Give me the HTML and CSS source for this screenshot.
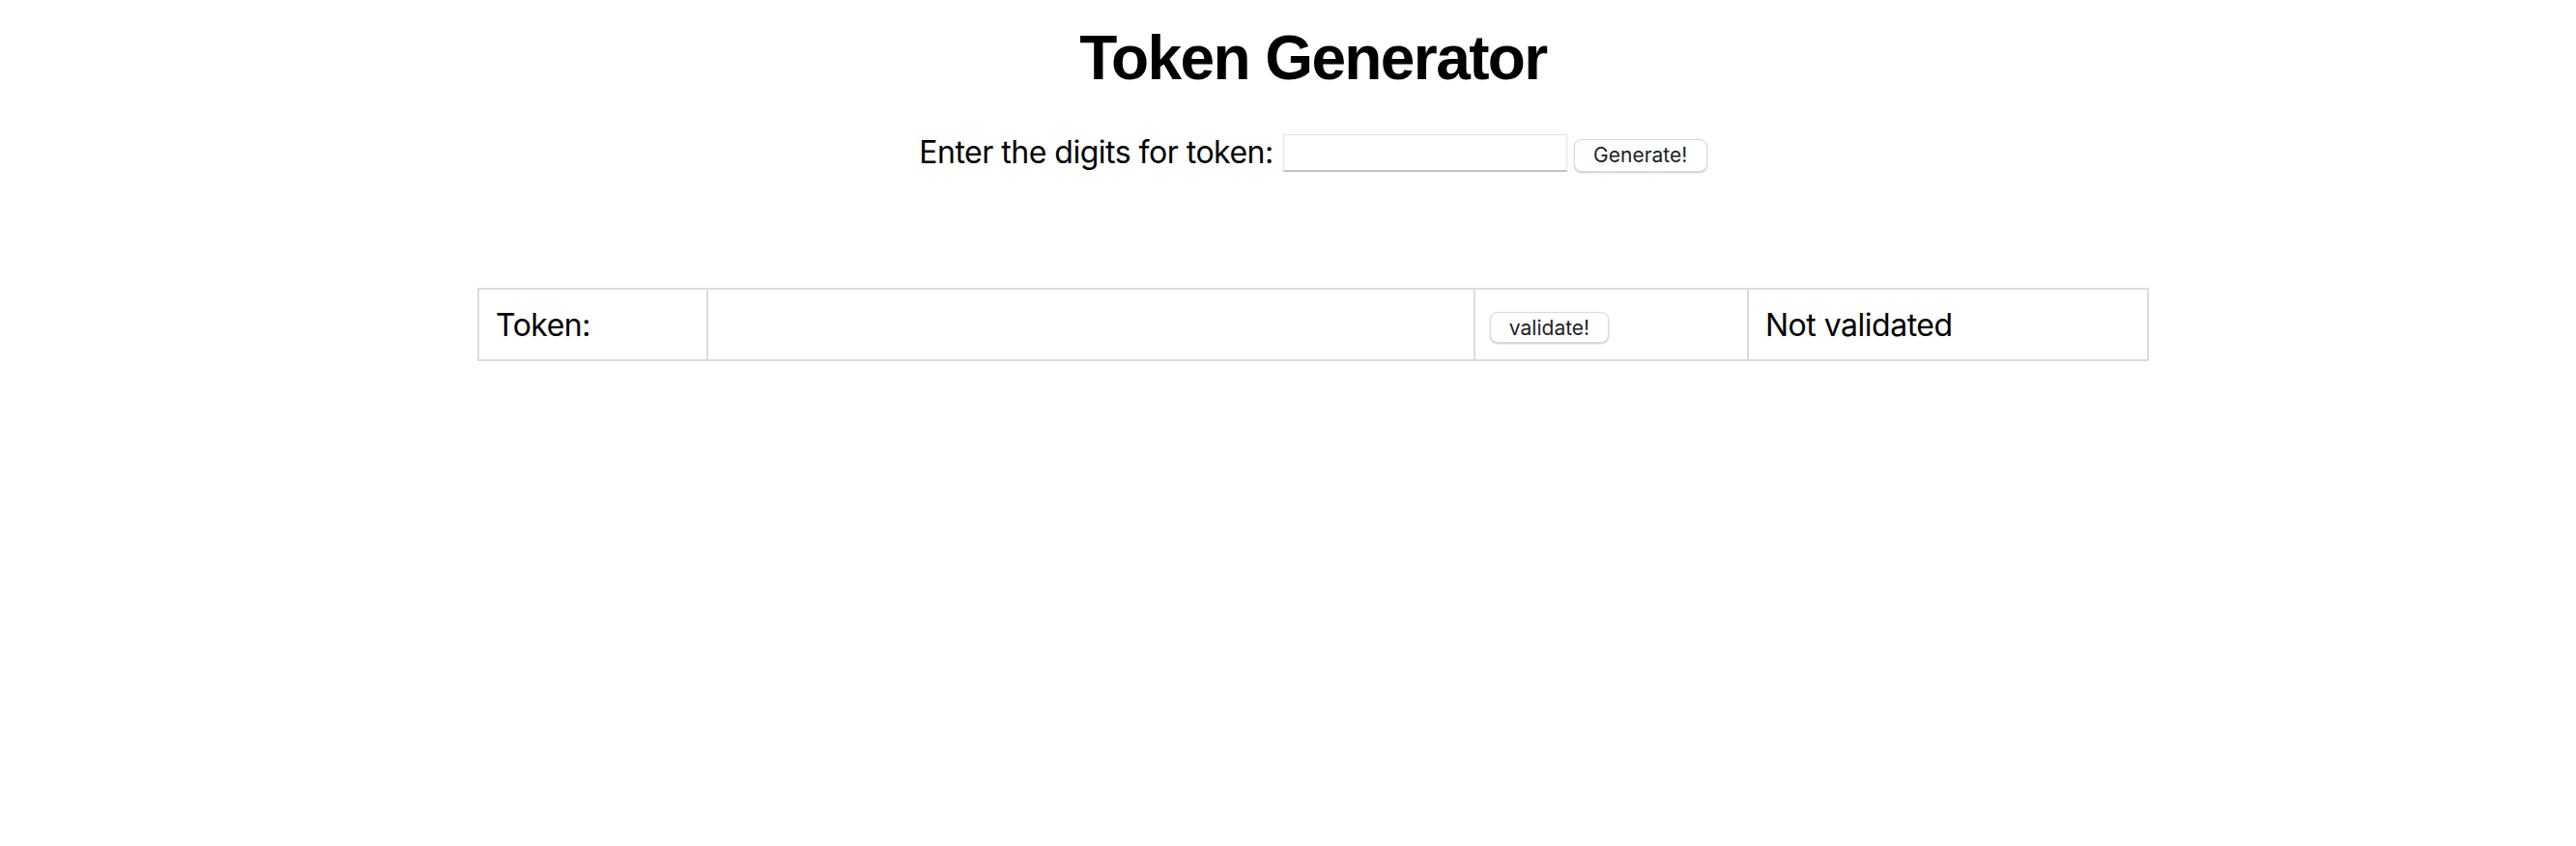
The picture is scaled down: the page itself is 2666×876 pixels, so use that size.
FILE: index.html
```html
<!DOCTYPE html>
<html lang="en">
<head>
<meta charset="utf-8">
<title>Token Generator</title>
<link rel="stylesheet" href="styles.css">
</head>
<body>
<main class="page">
  <h1 class="title">Token Generator</h1>
  <form class="gen-row" onsubmit="return false">
    <label class="gen-label" for="digits">Enter the digits for token:</label>
    <input class="gen-input" id="digits" type="text">
    <button class="btn btn-gen" type="button">Generate!</button>
  </form>
  <table class="token-table">
    <colgroup>
      <col class="c1"><col class="c2"><col class="c3"><col class="c4">
    </colgroup>
    <tr>
      <td>Token:</td>
      <td></td>
      <td><button class="btn btn-val" type="button">validate!</button></td>
      <td>Not validated</td>
    </tr>
  </table>
</main>
</body>
</html>
```

FILE: styles.css
```css
html, body {
  margin: 0;
  padding: 0;
  background: #fff;
}
body {
  font-family: Inter, "Noto Sans", sans-serif;
  color: #000;
}
.page {
  padding-left: 52px;
  display: flex;
  flex-direction: column;
  align-items: center;
}
.title {
  font-family: "Liberation Sans", Arial, sans-serif;
  font-weight: 700;
  font-size: 64px;
  line-height: 72px;
  letter-spacing: -1.6px;
  margin: 24px 0 0;
}
.gen-row {
  display: flex;
  align-items: center;
  margin-top: 42px;
  font-size: 32px;
  line-height: 40px;
  letter-spacing: -0.5px;
}
.gen-label {
  margin-right: 10px;
}
.gen-input {
  box-sizing: border-box;
  width: 294px;
  height: 39px;
  border: 1px solid #e4e4e4;
  border-bottom: 2px solid #c3c3c3;
  border-radius: 0;
  outline: none;
  margin: 0 7px 0 0;
  padding: 0 6px;
  font: inherit;
}
.btn {
  box-sizing: border-box;
  font-family: Inter, "Noto Sans", sans-serif;
  font-size: 21px;
  letter-spacing: 0;
  color: #222;
  background: #fff;
  border: 1px solid #dadada;
  border-radius: 8px;
  box-shadow: 0 1px 2px rgba(0, 0, 0, 0.22);
  padding: 0;
  margin: 0;
}
.btn-gen {
  width: 138px;
  height: 34px;
  margin-top: 5px;
}
.btn-val {
  width: 123px;
  height: 32px;
  vertical-align: middle;
  margin-left: -2px;
}
.token-table {
  margin-top: 120px;
  width: 1728px;
  table-layout: fixed;
  border-collapse: collapse;
  font-size: 32px;
  line-height: 39px;
  letter-spacing: -0.5px;
}
.token-table td {
  border: 2px solid #dcdcdc;
  padding: 17px 17px 16px;
  white-space: nowrap;
}
.c1 { width: 237px; }
.c2 { width: 794px; }
.c3 { width: 283px; }
.c4 { width: 414px; }
```
